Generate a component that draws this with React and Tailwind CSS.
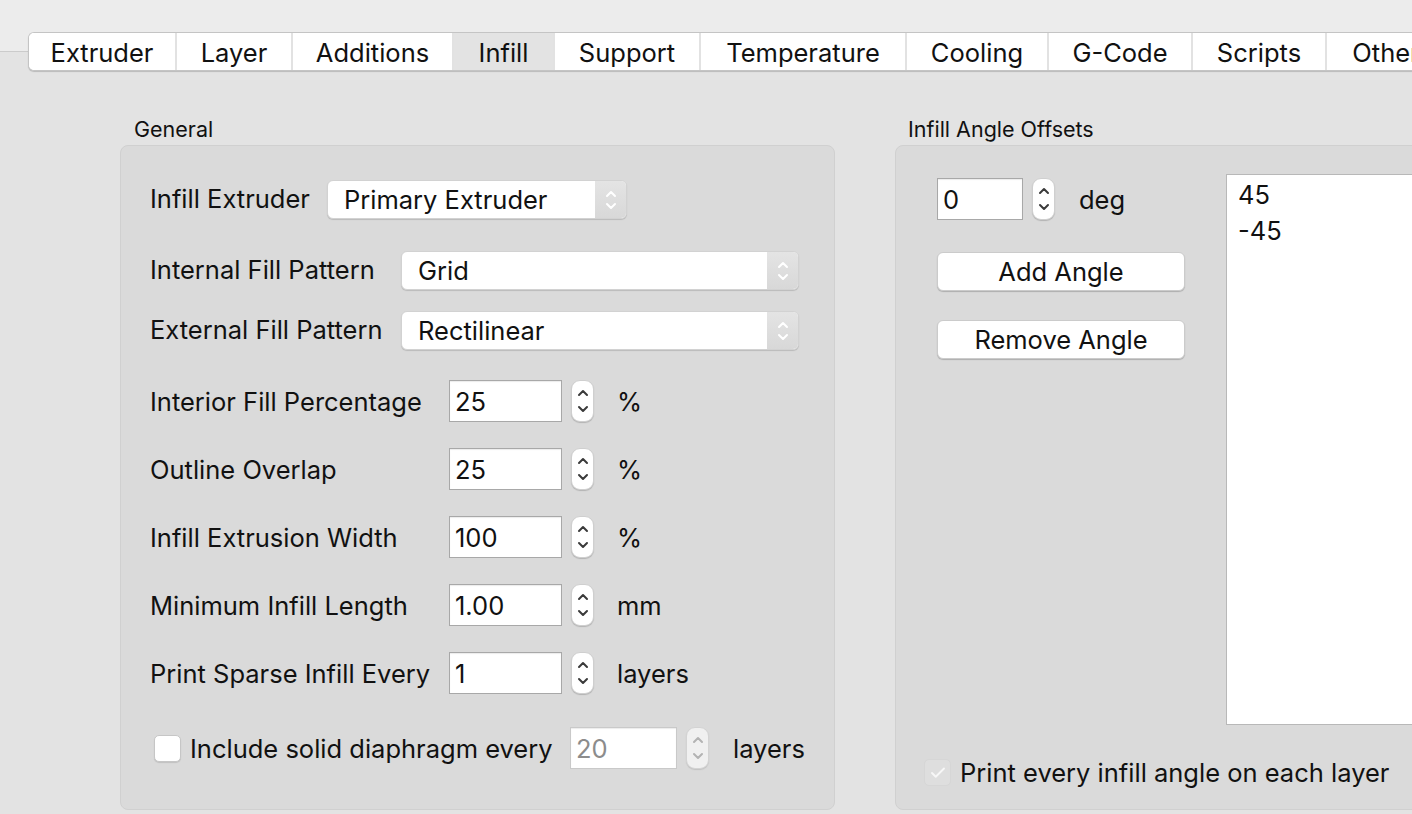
import { Check } from "lucide-react";

const TABS = [
  { name: "Extruder", w: 146 },
  { name: "Layer", w: 116 },
  { name: "Additions", w: 161 },
  { name: "Infill", w: 101, active: true },
  { name: "Support", w: 146 },
  { name: "Temperature", w: 206 },
  { name: "Cooling", w: 142 },
  { name: "G-Code", w: 144 },
  { name: "Scripts", w: 134 },
  { name: "Other", w: 120 },
];

const NUMERIC = [
  { label: "Interior Fill Percentage", value: "25", unit: "%" },
  { label: "Outline Overlap", value: "25", unit: "%" },
  { label: "Infill Extrusion Width", value: "100", unit: "%" },
  { label: "Minimum Infill Length", value: "1.00", unit: "mm" },
  { label: "Print Sparse Infill Every", value: "1", unit: "layers" },
];

function Stepper({ disabled }) {
  return (
    <div
      className={
        "flex h-[42px] w-[23px] flex-col items-center justify-center rounded-[9px] border border-[#cfcfcf] bg-white shadow-[0_1px_1px_rgba(0,0,0,0.18)] " +
        (disabled ? "opacity-60" : "")
      }
    >
      <svg width="12" height="32" viewBox="0 0 12 32" fill="none" stroke={disabled ? "#9a9a9a" : "#3a3a3a"} strokeWidth="2" strokeLinecap="round" strokeLinejoin="round">
        <path d="M2 10 L6 6 L10 10" />
        <path d="M2 22 L6 26 L10 22" />
      </svg>
    </div>
  );
}

function NumberField({ value, width = "w-[113px]", disabled }) {
  return (
    <div
      className={
        "flex h-[42px] items-center border bg-white pl-[5px] pt-[2px] shadow-[inset_0_1px_1px_rgba(0,0,0,0.08)] " +
        width +
        (disabled ? " border-[#c9c9c9] text-[#8c8c8c]" : " border-[#a8a8a8] text-[#111]")
      }
    >
      {value}
    </div>
  );
}

function PopUp({ value, width }) {
  return (
    <div className={"flex h-[39px] items-stretch overflow-hidden rounded-[6px] border border-[#d2d2d2] bg-white shadow-[0_1px_1px_rgba(0,0,0,0.15)] " + width}>
      <div className="flex flex-1 items-center pl-[16px] pt-[2px] text-[#111]">{value}</div>
      <div className="flex w-[31px] items-center justify-center bg-gradient-to-b from-[#e4e4e4] to-[#d8d8d8]">
        <svg width="14" height="26" viewBox="0 0 14 26" fill="none" stroke="#ffffff" strokeWidth="2" strokeLinecap="round" strokeLinejoin="round">
          <path d="M3 9 L7 5 L11 9" />
          <path d="M3 17 L7 21 L11 17" />
        </svg>
      </div>
    </div>
  );
}

function Button({ children }) {
  return (
    <div className="flex h-[39px] w-[248px] items-center justify-center rounded-[6px] border border-[#cbcbcb] bg-white pt-[1px] text-[#111] shadow-[0_1px_1px_rgba(0,0,0,0.2)]">
      {children}
    </div>
  );
}

export default function App() {
  return (
    <div
      className="h-[814px] w-[1412px] overflow-hidden bg-[#e3e3e3] text-[25.5px] text-[#111]"
      style={{ fontFamily: "Inter, 'Noto Sans', sans-serif" }}
    >
      {/* window chrome strip above the tab view */}
      <div className="h-[52px] border-b border-[#cbcbcb] bg-[#ececec]" />

      {/* tab segmented control */}
      <div className="-mt-[20px] ml-[28px] flex h-[39px] w-max overflow-hidden rounded-l-[6px] border border-r-0 border-[#c4c4c4] bg-white shadow-[0_1px_1px_rgba(0,0,0,0.18)]">
        {TABS.map((t, i) => (
          <div
            key={t.name}
            style={{ width: t.w }}
            className={
              "flex shrink-0 items-center justify-center pt-[3px] " +
              (i > 0 ? "border-l-[2px] border-[#e2e2e2] " : "") +
              (t.active ? "bg-[#e3e3e3]" : "bg-white")
            }
          >
            {t.name}
          </div>
        ))}
      </div>

      <div className="mt-[46px] flex gap-[60px] pl-[120px]">
        {/* General */}
        <div className="w-[715px] shrink-0">
          <div className="mb-[4px] pl-[14px] text-[21.5px] leading-[24px]">General</div>
          <div className="h-[665px] rounded-[8px] border border-[#d0d0d0] bg-[#dadada] pl-[29px] pt-[34px]">
            <div className="flex items-center">
              <span className="w-[177px]">Infill Extruder</span>
              <PopUp value="Primary Extruder" width="w-[300px]" />
            </div>
            <div className="mt-[32px] flex items-center">
              <span className="w-[251px]">Internal Fill Pattern</span>
              <PopUp value="Grid" width="w-[398px]" />
            </div>
            <div className="mt-[21px] flex items-center">
              <span className="w-[251px]">External Fill Pattern</span>
              <PopUp value="Rectilinear" width="w-[398px]" />
            </div>

            <div className="mt-[30px] flex flex-col gap-[26px]">
              {NUMERIC.map((r) => (
                <div key={r.label} className="flex items-center">
                  <span className="w-[299px] pt-[2px]">{r.label}</span>
                  <NumberField value={r.value} />
                  <div className="ml-[9px]">
                    <Stepper />
                  </div>
                  <span className="ml-[23px] pt-[2px]">{r.unit}</span>
                </div>
              ))}
            </div>

            <div className="mt-[33px] flex items-center pl-[4px]">
              <div className="h-[27px] w-[27px] shrink-0 rounded-[5px] border border-[#c6c6c6] bg-white shadow-[0_1px_1px_rgba(0,0,0,0.12)]" />
              <span className="ml-[9px] w-[380px] whitespace-nowrap pt-[2px]">Include solid diaphragm every</span>
              <NumberField value="20" width="w-[107px]" disabled />
              <div className="ml-[9px]">
                <Stepper disabled />
              </div>
              <span className="ml-[24px] pt-[2px]">layers</span>
            </div>
          </div>
        </div>

        {/* Infill Angle Offsets */}
        <div className="w-[560px] shrink-0">
          <div className="mb-[4px] pl-[13px] text-[21.5px] leading-[24px]">Infill Angle Offsets</div>
          <div className="flex h-[665px] flex-col rounded-[8px] border border-[#d0d0d0] bg-[#dadada]">
            <div className="flex pt-[28px]">
              <div className="ml-[41px] w-[248px]">
                <div className="flex items-center pt-[4px]">
                  <NumberField value="0" width="w-[86px]" />
                  <div className="ml-[9px]">
                    <Stepper />
                  </div>
                  <span className="ml-[24px] pt-[2px]">deg</span>
                </div>
                <div className="mt-[32px]">
                  <Button>Add Angle</Button>
                </div>
                <div className="mt-[29px]">
                  <Button>Remove Angle</Button>
                </div>
              </div>
              <div className="ml-[41px] h-[551px] flex-1 border border-[#b8b8b8] bg-white pl-[11px] pt-[2px] leading-[36px]">
                <div>45</div>
                <div>-45</div>
              </div>
            </div>
            <div className="mt-[28px] flex items-center pl-[28px]">
              <div className="flex h-[27px] w-[27px] items-center justify-center rounded-[5px] border border-[#d6d6d6] bg-[#dedede]">
                <Check size={18} strokeWidth={2.5} color="#f7f7f7" />
              </div>
              <span className="ml-[9px] pt-[1px]">Print every infill angle on each layer</span>
            </div>
          </div>
        </div>
      </div>
    </div>
  );
}
